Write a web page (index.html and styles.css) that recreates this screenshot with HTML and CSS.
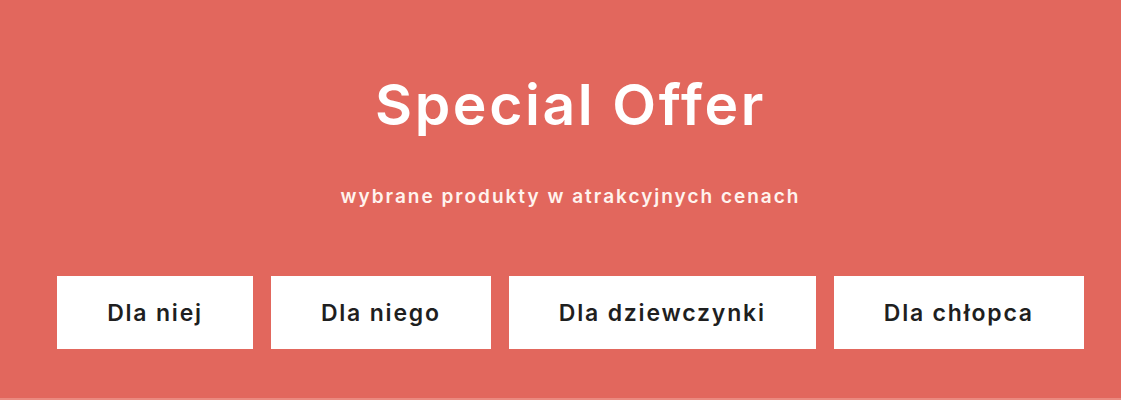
FILE: index.html
```html
<!DOCTYPE html>
<html lang="pl">
<head>
<meta charset="utf-8">
<title>Special Offer</title>
<link rel="stylesheet" href="styles.css">
</head>
<body>
<section class="offer">
  <h1 class="offer-title">Special Offer</h1>
  <p class="offer-subtitle">wybrane produkty w atrakcyjnych cenach</p>
  <nav class="offer-links">
    <a class="offer-link" href="#">Dla niej</a>
    <a class="offer-link" href="#">Dla niego</a>
    <a class="offer-link" href="#">Dla dziewczynki</a>
    <a class="offer-link" href="#">Dla chłopca</a>
  </nav>
</section>
</body>
</html>
```
FILE: styles.css
```css
html, body {
  margin: 0;
  padding: 0;
}

body {
  font-family: Inter, "Noto Sans", "DejaVu Sans", sans-serif;
  background: #e2675d;
}

.offer {
  box-sizing: border-box;
  height: 400px;
  padding: 68px 0 0 20px;
  background: #e2675d;
  display: flex;
  flex-direction: column;
  align-items: center;
  border-bottom: 2px solid #ea8a80;
}

.offer-title {
  margin: 0;
  color: #ffffff;
  font-size: 57px;
  font-weight: 600;
  line-height: 74px;
  letter-spacing: 2.6px;
}

.offer-subtitle {
  margin: 43px 0 0;
  color: #fff3ee;
  font-size: 19px;
  font-weight: 600;
  line-height: 24px;
  letter-spacing: 2px;
}

.offer-links {
  display: flex;
  gap: 18px;
  margin-top: 67px;
}

.offer-link {
  display: flex;
  align-items: center;
  height: 73px;
  padding: 0 50px;
  background: #ffffff;
  color: #1f1f1f;
  font-size: 23px;
  font-weight: 600;
  text-decoration: none;
  letter-spacing: 1.8px;
}
```
